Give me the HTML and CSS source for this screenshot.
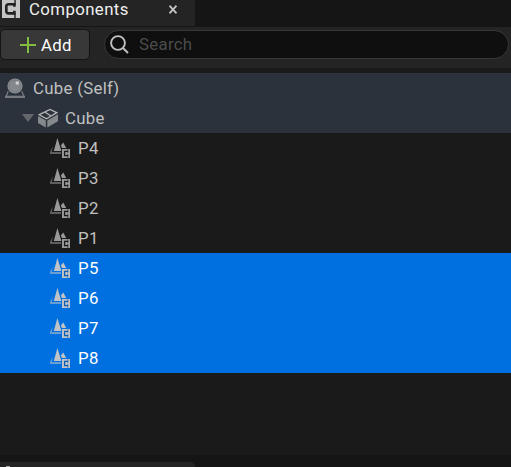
FILE: index.html
```
<!DOCTYPE html>
<html lang="en">
<head>
<meta charset="utf-8">
<title>Components</title>
<link rel="stylesheet" href="styles.css">
</head>
<body>
<svg class="defs" aria-hidden="true">
  <symbol id="cone" viewBox="0 0 20 20">
    <path class="dim" d="M2.8 8.5 1.8 14H11v2H0v-2z"/>
    <path d="M7.4 0 11.4 13H3.8zM13.3 4.6 16.2 10H12l-1.2-2.5z"/>
    <path d="M12 11h8v9h-8z"/>
    <path class="cut" d="M17.6 14.6v-1.2h-3v4.2h3v-1.2"/>
    <path class="slot" d="M17.8 11v2.5M17.8 17.5V20"/>
  </symbol>
</svg>
<main class="panel">
  <header class="tabs">
    <div class="tab">
      <svg class="tab-icon" viewBox="0 0 18 18"><path fill="#c4c4c4" d="M0 0h18v18H0z"/><path d="M12.4 6.8V4.2H6.6Q4.3 4.2 4.3 6.5v4.6q0 2.3 2.3 2.3h5.8v-2.6" fill="none" stroke="#202020" stroke-width="2.6"/><path d="M13 0v5M13 13v5" stroke="#202020" stroke-width="1.4"/></svg>
      <span class="title">Components</span>
      <svg class="close" viewBox="0 0 8 8"><path d="m.5.2 7 7.6m0-7.6-7 7.6" stroke="#c5c5c5" stroke-width="1.7"/></svg>
    </div>
  </header>
  <div class="toolbar">
    <button class="add"><svg viewBox="0 0 16 16"><path d="M8 0v16M0 8h16" stroke="#83bd40" stroke-width="2"/></svg><span>Add</span></button>
    <div class="search"><svg viewBox="0 0 19 19"><circle cx="8" cy="8" r="6.9"/><path d="m13 13 5 5"/></svg><span>Search</span></div>
  </div>
  <div class="tree">
    <div class="row parent root">
      <svg class="self" viewBox="0 0 20 20"><path d="M3.2 13.2 1 18.8h18l-2.2-5.6" fill="none" stroke="#777b80" stroke-width="1.3"/><path d="M0 17.7h20V20H0z" fill="#777b80"/><circle cx="10" cy="8" r="7.6" fill="#8d9093"/><circle cx="10" cy="8" r="6" fill="#85898d" stroke="#74787d"/><circle cx="12.3" cy="5" r="1.8" fill="#cdd0d2"/></svg>
      <span>Cube (Self)</span>
    </div>
    <div class="row parent mesh">
      <svg class="arrow" viewBox="0 0 12 8"><path d="M0 0h12L6 8z" fill="#64686c"/></svg>
      <svg class="box" viewBox="0 0 20 20"><path d="m0 8 7.8 4.5v7L0 15zM9.3 12.5 20 6.3v7L9.3 19.5z" fill="#85898c"/><path d="M1.3 6.7 12 1.4l6.8 3.2-10.3 6.2zM6.7 4l6.3 4" fill="none" stroke="#b5b7b9" stroke-width="1.3"/></svg>
      <span>Cube</span>
    </div>
    <div class="row child"><svg><use href="#cone"/></svg><span>P4</span></div>
    <div class="row child"><svg><use href="#cone"/></svg><span>P3</span></div>
    <div class="row child"><svg><use href="#cone"/></svg><span>P2</span></div>
    <div class="row child"><svg><use href="#cone"/></svg><span>P1</span></div>
    <div class="row child selected"><svg><use href="#cone"/></svg><span>P5</span></div>
    <div class="row child selected"><svg><use href="#cone"/></svg><span>P6</span></div>
    <div class="row child selected"><svg><use href="#cone"/></svg><span>P7</span></div>
    <div class="row child selected"><svg><use href="#cone"/></svg><span>P8</span></div>
  </div>
  <footer class="dock"><div class="next-tab"><i></i></div></footer>
</main>
</body>
</html>
```
FILE: styles.css
```
* { box-sizing: border-box; }
body { margin: 0; background: #1a1a1a; font: 16.8px/20px Roboto, "Liberation Sans", sans-serif; letter-spacing: .3px; color: #c0c0c0; overflow: hidden; }
svg { display: block; flex: none; }
.defs { display: none; }
.panel { height: 467px; display: flex; flex-direction: column; }
.tabs { height: 27px; background: #151515; flex: none; }
.tab { width: 195px; height: 26px; background: #242424; display: flex; padding-left: 2px; }
.tab-icon { width: 18px; height: 18px; }
.title { width: 139px; margin-left: 9px; color: #f0f0f0; line-height: 19px; letter-spacing: .4px; }
.close { width: 8px; height: 9px; margin: 5px 0 0 1px; }
.toolbar { height: 41px; flex: none; background: #242424; display: flex; padding: 2px 2px 0 0; }
.add { width: 90px; height: 31px; border: 1px solid #141414; border-radius: 5px; background: #383838; display: flex; align-items: center; padding: 0 0 0 19px; gap: 5px; color: #fff; font: inherit; letter-spacing: inherit; }
.add svg { width: 16px; height: 16px; }
.search { flex: 1; height: 29px; margin: 1px 0 0 14px; border: 1px solid #383838; border-radius: 15px; background: #0f0f0f; display: flex; align-items: center; padding-left: 5px; color: #4b4b4b; }
.search svg { width: 19px; height: 19px; fill: none; stroke: #c0c0c0; stroke-width: 1.9; }
.search span { margin-left: 10px; padding-bottom: 2px; }
.tree { margin-top: 5px; flex: 1; }
.row { height: 30px; display: flex; align-items: center; }
.row span { padding-bottom: 1px; }
.parent { background: #2b323b; }
.root { padding-left: 5px; }
.self { width: 20px; height: 20px; }
.root span { margin-left: 8px; }
.mesh { padding-left: 22px; }
.arrow { width: 12px; height: 8px; }
.box { width: 20px; height: 20px; margin-left: 4px; }
.mesh span { margin-left: 7px; }
.child { padding-left: 50px; fill: #999; --cut: #1a1a1a; }
.child svg { width: 20px; height: 20px; }
.child span { margin-left: 8px; }
.dim { opacity: .55; }
.cut { fill: none; stroke: var(--cut); stroke-width: 1.3; }
.slot { stroke: var(--cut); stroke-width: .6; }
.selected { background: #0070e0; color: #fff; fill: #bfc3c8; --cut: #0b5fb5; }
.dock { height: 12px; background: #151515; padding-top: 7px; flex: none; }
.next-tab { width: 195px; height: 5px; background: #242424; border-radius: 0 5px 0 0; padding: 4px 0 0 6px; }
.next-tab i { display: block; width: 4px; height: 1px; background: #aaa; }
```
